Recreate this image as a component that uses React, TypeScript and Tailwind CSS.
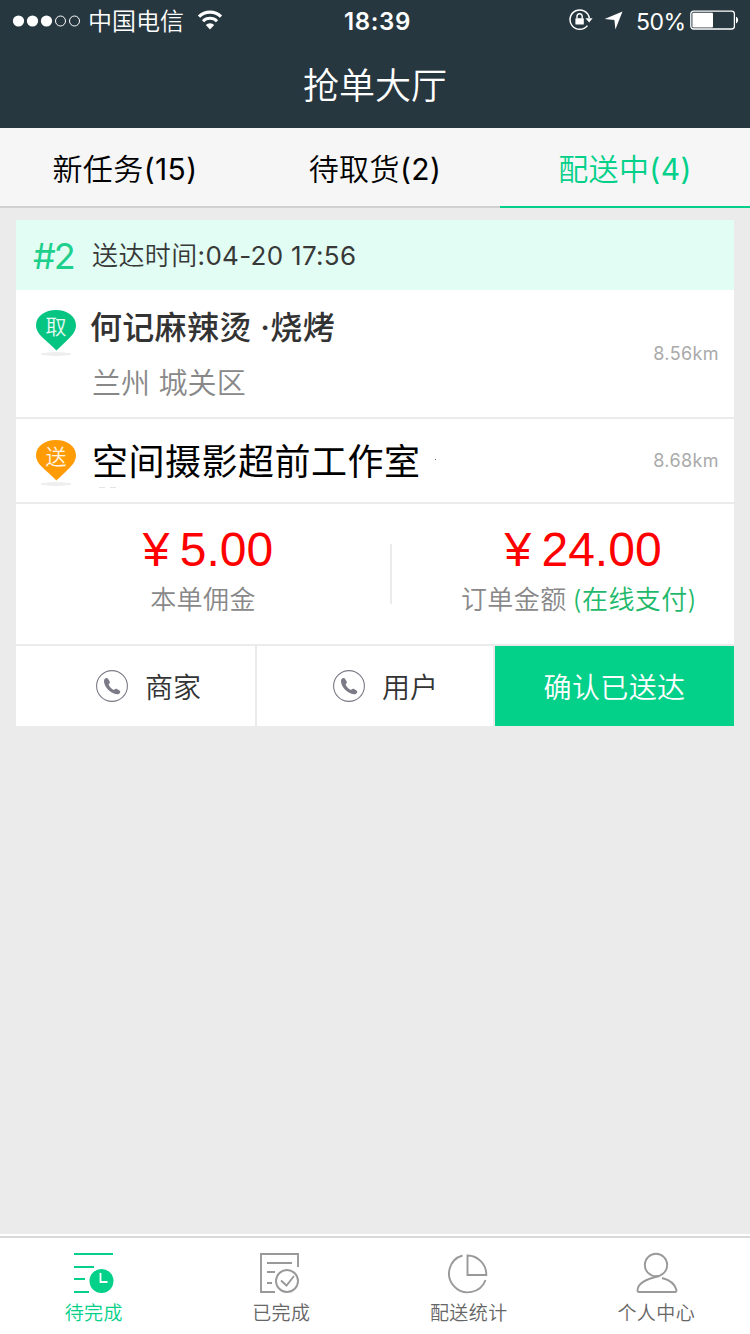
import React from 'react';

interface TabProps {
  label: string;
  count: number;
  active?: boolean;
}

const Tab: React.FC<TabProps> = ({ label, count, active }) => (
  <button
    className={`flex-1 h-20 pt-1 border-b-2 text-[30px] tracking-[0.4px] flex items-center justify-center ${
      active ? 'text-[#03d089] border-[#03d089]' : 'text-black border-[#d0d0d0]'
    }`}
  >
    {label}
    <span className="font-normal">({count})</span>
  </button>
);

const StatusBar: React.FC = () => (
  <div className="h-10 flex items-center pl-3 pr-[11px] text-white">
    <div className="flex-1 flex items-center">
      <svg width="70" height="12" viewBox="0 0 70 12" className="mt-px" fill="white">
        <circle cx="6.5" cy="6" r="5.6" />
        <circle cx="20.5" cy="6" r="5.6" />
        <circle cx="34.5" cy="6" r="5.6" />
        <circle cx="48.5" cy="6" r="5" fill="none" stroke="white" />
        <circle cx="62.5" cy="6" r="5" fill="none" stroke="white" />
      </svg>
      <span className="ml-1.5 pt-[3px] text-2xl leading-10">中国电信</span>
      <svg width="26" height="20" viewBox="0 0 26 20" className="ml-[13px]" fill="none" stroke="white">
        <path d="M2 6.6a15.6 15.6 0 0 1 22 0" strokeWidth="3.2" />
        <path d="M6 11.2a10 10 0 0 1 14 0" strokeWidth="3" />
        <path d="M13 19.4l-4.2-4.4a5.8 5.8 0 0 1 8.4 0z" fill="white" stroke="none" />
      </svg>
    </div>
    <span className="pl-1 pt-[3px] text-2xl font-semibold tracking-[0.6px] leading-10">18:39</span>
    <div className="flex-1 flex items-center justify-end">
      <svg width="24" height="22" viewBox="0 0 24 22" fill="none" stroke="white">
        <path d="M18.4 16.6a9.7 9.7 0 1 1 1.9-7.6" strokeWidth="1.5" />
        <path d="M16.4 9.2h7.2l-3.4 4.2z" fill="white" stroke="none" />
        <rect x="6.4" y="9.2" width="8.4" height="6.4" rx="0.6" fill="white" stroke="none" />
        <path d="M8 9.6V7.6a2.6 2.8 0 0 1 5.2 0v2" strokeWidth="1.4" />
      </svg>
      <svg width="19" height="19" viewBox="0 0 19 19" className="ml-[11px]" fill="white">
        <path d="M18.5 0.5L11.4 18.4 10.4 8.9 0.6 8.1z" />
      </svg>
      <span className="w-[49px] ml-[13px] pt-[3px] text-[23px] font-normal leading-10 tracking-[-0.5px]">50%</span>
      <svg width="49" height="20" viewBox="0 0 49 20" className="ml-[5px]" fill="white">
        <rect x="0.8" y="1.2" width="43.6" height="17.8" rx="2.8" fill="none" stroke="white" strokeWidth="1.3" />
        <rect x="2.4" y="2.8" width="20.6" height="14.6" rx="1" />
        <path d="M46 6.8c2.8 0.8 2.8 5.8 0 6.6z" />
      </svg>
    </div>
  </div>
);

const Pin: React.FC<{ text: string; color: string }> = ({ text, color }) => (
  <div className="relative w-10 h-12">
    <svg width="40" height="48" viewBox="0 0 40 48">
      <ellipse cx="20" cy="45" rx="15.5" ry="1.9" fill="#eeeeee" />
      <path
        d="M20.4 41.5C14 35 7 29.5 3.2 25C1 22 0 19 0 16.5C0 7 9 1 20 1S40 7 40 16.5C40 19 39 22 37 25C33 30 27 35 20.4 41.5Z"
        fill={color}
      />
    </svg>
    <span className="absolute inset-x-0 top-px text-center text-white/90 text-[21px] leading-[34px]">{text}</span>
  </div>
);

const PhoneIcon: React.FC = () => (
  <svg width="32" height="32" viewBox="0 0 32 32" fill="none">
    <circle cx="16" cy="16" r="15.4" stroke="#7b7a86" strokeWidth="1.1" />
    <path
      d="M8.4 9.2C9.4 7.9 11.2 7.6 12 8.7L13.7 11.6C14.2 12.7 13.5 13.6 12.6 14.3C13.2 16.6 15.3 18.9 18 20C19 19 20 18.5 21 19L23.8 20.7C24.8 21.5 24.2 22.8 23.1 23.7C21.2 25 17 23.8 13.3 20.7C9.5 17.5 7 12.1 8.4 9.2Z"
      fill="#7b7a86"
    />
  </svg>
);

const PendingIcon: React.FC = () => (
  <svg width="40" height="42" viewBox="0 0 40 42" fill="none" stroke="#03d089" strokeWidth="2">
    <path d="M0 2h39M0 15h20M0 27h11M0 40h15" />
    <circle cx="27.5" cy="29" r="12" fill="#03d089" stroke="none" />
    <path d="M26.5 21v9h7" stroke="white" strokeWidth="1.8" />
  </svg>
);

const DoneIcon: React.FC = () => (
  <svg width="42" height="42" viewBox="0 0 42 42" fill="none" stroke="#999999" strokeWidth="1.9">
    <path d="M38 15V2H1v38h14M7 11h25M7 20h8M7 31h5" />
    <circle cx="27" cy="29" r="11" />
    <path d="M21 28.5l5.5 5 7.5-9.5" />
  </svg>
);

const StatsIcon: React.FC = () => (
  <svg width="42" height="42" viewBox="0 0 42 42" fill="none" stroke="#999999" strokeWidth="1.9">
    <path d="M14.500 3.5A18.8 18.8 0 1 0 37.500 28" />
    <path d="M19.500 3.5v19.5h18.8A19 19 0 0 0 19.500 3.5Z" />
  </svg>
);

const UserIcon: React.FC = () => (
  <svg width="40" height="42" viewBox="0 0 40 42" fill="none" stroke="#999999" strokeWidth="1.9" className="overflow-visible">
    <circle cx="20" cy="13" r="11.2" />
    <path d="M23.5 24C14 26 2 30 1.5 38q0 2 1.5 2h36q1.5 0 1.5-2C39 32 34 28 26 26" />
  </svg>
);

const navItems = [
  { label: '待完成', icon: <PendingIcon />, active: true },
  { label: '已完成', icon: <DoneIcon /> },
  { label: '配送统计', icon: <StatsIcon /> },
  { label: '个人中心', icon: <UserIcon /> },
];

export default function App() {
  return (
    <div className="w-[750px] h-[1334px] flex flex-col overflow-hidden bg-[#ebebeb] font-[350] font-['Inter','Noto_Sans_CJK_SC',sans-serif]">
      <header className="h-32 bg-[#27373f] text-white">
        <StatusBar />
        <h1 className="h-[88px] pt-[3px] flex items-center justify-center text-4xl font-[350]">抢单大厅</h1>
      </header>

      <nav className="flex bg-[#f6f6f6]">
        <Tab label="新任务" count={15} />
        <Tab label="待取货" count={2} />
        <Tab label="配送中" count={4} active />
      </nav>

      <main className="flex-1 px-4 pt-3">
        <div className="bg-white">
          <div className="h-[70px] bg-[#e1fdf4] flex items-center pl-[17px]">
            <span className="w-[59px] pt-px text-[36px] font-normal tracking-[-2px] text-[#1fcf8c]">#2</span>
            <span className="text-[26px] tracking-[0.4px] text-[#383838]">
              送达时间<span className="font-normal tracking-[0.3px]">:04-20 17:56</span>
            </span>
          </div>

          <section className="h-[129px] border-b-2 border-[#ebebeb] flex items-center pl-5 pr-4">
            <div className="self-start pt-[19px]">
              <Pin text="取" color="#06c481" />
            </div>
            <div className="flex-1 self-start pt-3.5 pl-3.5">
              <p className="text-[32px] leading-[48px] tracking-[0.3px] font-medium text-[#333]">何记麻辣烫 ·烧烤</p>
              <p className="pl-0.5 mt-2 text-[29px] leading-[48px] tracking-[0.1px] text-[#888]">兰州 城关区</p>
            </div>
            <span className="-mr-px text-lg font-normal tracking-[0.4px] text-[#aaa]">8.56km</span>
          </section>

          <section className="h-[85px] border-b-2 border-[#ebebeb] flex items-center pl-5 pr-4">
            <div className="self-start pt-5">
              <Pin text="送" color="#ff9b05" />
            </div>
            <div className="relative flex-1 pl-4">
              <p className="pt-0.5 text-[36px] leading-[48px] tracking-[0.5px] font-normal text-black">空间摄影超前工作室</p>
              {/* remains of the hidden address line */}
              <i className="absolute left-[359px] top-[23px] w-px h-px bg-[#666]" />
              <i className="absolute left-[23px] top-[51px] w-1.5 h-px bg-[#e4e4e4]" />
              <i className="absolute left-[34px] top-[51px] w-1.5 h-px bg-[#e4e4e4]" />
            </div>
            <span className="-mr-px text-lg font-normal tracking-[0.4px] text-[#aaa]">8.68km</span>
          </section>

          <section className="h-[142px] border-b-2 border-[#ebebeb] flex items-center text-center">
            <div className="w-[374px] h-full pt-[18px]">
              <p className="pl-2.5 text-5xl leading-[56px] [word-spacing:-3px] font-normal text-[#ff0000] font-['Liberation_Sans',sans-serif]">¥ 5.00</p>
              <p className="mt-[3px] text-[26px] leading-[38px] tracking-[0.4px] text-[#888]">本单佣金</p>
            </div>
            <div className="w-0.5 h-[60px] bg-[#ebebeb]" />
            <div className="flex-1 h-full pt-[18px] pl-[32px]">
              <p className="pl-2 text-5xl leading-[56px] [word-spacing:-3px] font-normal text-[#ff0000] font-['Liberation_Sans',sans-serif]">¥ 24.00</p>
              <p className="mt-[3px] text-[26px] leading-[38px] tracking-[0.4px] text-[#888] whitespace-nowrap">
                订单金额<span className="ml-1.5 text-[#1fb96b]">(在线支付)</span>
              </p>
            </div>
          </section>

          <div className="h-20 flex text-[28px] text-[#333]">
            <button className="w-[241px] pl-20 border-r-2 border-[#ebebeb] flex items-center gap-[17px]">
              <PhoneIcon />
              <span className="pt-[3px]">商家</span>
            </button>
            <button className="w-[238px] pl-[76px] border-r-2 border-[#ebebeb] flex items-center gap-[17px]">
              <PhoneIcon />
              <span className="pt-[3px]">用户</span>
            </button>
            <button className="flex-1 pt-[3px] bg-[#03d089] text-white tracking-[0.4px]">确认已送达</button>
          </div>
        </div>
      </main>

      <footer className="h-[100px] border-t-2 border-white bg-white">
        <div className="h-full border-t-2 border-[#d9d9d9] flex">
          {navItems.map((item) => (
            <button
              key={item.label}
              className={`flex-1 flex flex-col items-center pt-[14px] ${item.active ? 'text-[#03d089]' : 'text-[#666]'}`}
            >
              {item.icon}
              <span className="mt-[5px] text-[19px] leading-[30px] tracking-[0.4px]">{item.label}</span>
            </button>
          ))}
        </div>
      </footer>
    </div>
  );
}
